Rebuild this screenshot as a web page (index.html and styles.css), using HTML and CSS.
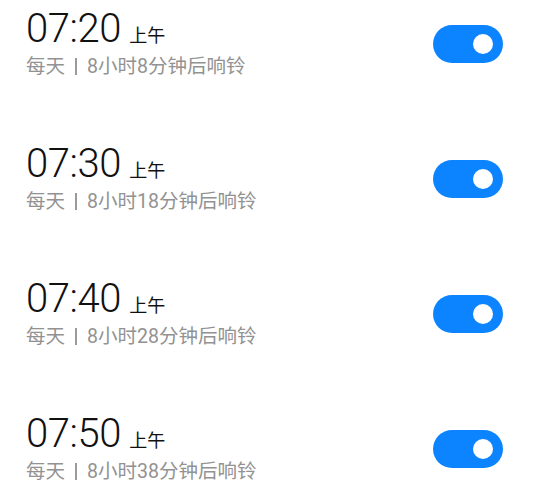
FILE: index.html
```html
<!DOCTYPE html>
<html>
<head>
    <title>闹钟</title>
    <link rel="stylesheet" href="styles.css">
</head>
<body>
    <ul class="alarm-list">
        <li class="alarm">
            <div class="alarm-info">
                <div class="alarm-time">07:20<span class="alarm-period">上午</span></div>
                <div class="alarm-desc">每天<span class="sep"></span>8小时8分钟后响铃</div>
            </div>
            <div class="switch on"><span class="knob"></span></div>
        </li>
        <li class="alarm">
            <div class="alarm-info">
                <div class="alarm-time">07:30<span class="alarm-period">上午</span></div>
                <div class="alarm-desc">每天<span class="sep"></span>8小时18分钟后响铃</div>
            </div>
            <div class="switch on"><span class="knob"></span></div>
        </li>
        <li class="alarm">
            <div class="alarm-info">
                <div class="alarm-time">07:40<span class="alarm-period">上午</span></div>
                <div class="alarm-desc">每天<span class="sep"></span>8小时28分钟后响铃</div>
            </div>
            <div class="switch on"><span class="knob"></span></div>
        </li>
        <li class="alarm">
            <div class="alarm-info">
                <div class="alarm-time">07:50<span class="alarm-period">上午</span></div>
                <div class="alarm-desc">每天<span class="sep"></span>8小时38分钟后响铃</div>
            </div>
            <div class="switch on"><span class="knob"></span></div>
        </li>
    </ul>
</body>
</html>
```

FILE: styles.css
```css
body {
    margin: 0;
    background: #fff;
    font-family: Roboto, "Noto Sans CJK SC", sans-serif;
}
.alarm-list {
    list-style: none;
    margin: 0;
    padding: 0 33px 0 26px;
}
.alarm {
    display: flex;
    align-items: center;
    justify-content: space-between;
    height: 135px;
}
.alarm:first-child {
    margin-top: -24px;
}
.alarm-time {
    font-size: 40px;
    font-weight: 300;
    line-height: 42px;
    color: #111;
    letter-spacing: -0.4px;
}
.alarm-period {
    font-family: "Noto Sans CJK SC", sans-serif;
    font-size: 18px;
    font-weight: 400;
    margin-left: 8px;
    letter-spacing: 0;
}
.alarm-desc {
    font-family: Roboto, "Noto Sans CJK SC", sans-serif;
    font-size: 19.5px;
    line-height: 24px;
    color: #929292;
}
.sep {
    display: inline-block;
    width: 2px;
    height: 17px;
    background: #9a9a9a;
    margin: 0 10px;
    vertical-align: -2px;
}
.switch {
    width: 70px;
    height: 38px;
    border-radius: 19px;
    background: #0d84ff;
    display: flex;
    align-items: center;
    justify-content: flex-end;
    padding-right: 10px;
    box-sizing: border-box;
}
.knob {
    width: 20px;
    height: 20px;
    border-radius: 50%;
    background: #fff;
}
```
